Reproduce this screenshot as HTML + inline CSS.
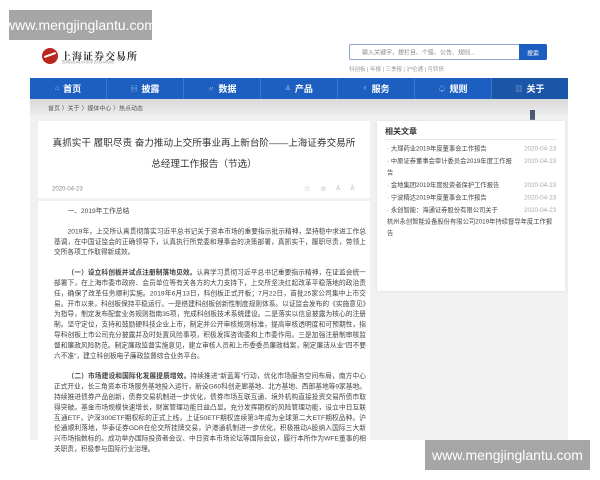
<!DOCTYPE html>
<html><head><meta charset="utf-8">
<style>
*{margin:0;padding:0;box-sizing:border-box}
body{width:600px;height:480px;background:#fff;position:relative;overflow:hidden;font-family:"Liberation Sans","Noto Sans CJK SC",sans-serif;color:#333}
.wm{position:absolute;background:#a6a6a6;color:#fff;font-size:14px;display:flex;align-items:center;justify-content:center}
.abs{position:absolute}
.s{transform:scale(.5);transform-origin:0 0}
.nav{left:30px;top:78px;width:538px;height:21px;background:#1d5fc0;display:flex}
.nav div{flex:1;color:#fff;font-size:9px;font-weight:bold;display:flex;align-items:center;justify-content:center;border-right:1px solid #3a78d0}
.nav div span{font-weight:normal;opacity:.6;margin-right:4px;font-size:7px}
.gray{left:30px;top:99px;width:538px;height:341px;background:#f1f1f1}
.crumb{left:30px;top:99px;width:538px;height:16px;background:linear-gradient(#d9d9d9,#ececec)}
.main{left:38px;top:121px;width:332px;height:319px;background:#fff}
.side{left:377px;top:121px;width:188px;height:170px;background:#fff;box-shadow:0 0 3px #ddd}
.p{font-size:13.4px;line-height:20.8px;color:#444;text-indent:27px;width:624px;text-align:justify}
.it{font-size:12.6px;line-height:23px;color:#444;position:relative;padding-left:12px;width:262px}
.d{position:absolute;left:286px;top:0;color:#aaa;white-space:nowrap}
</style></head><body>
<div class="wm" style="left:9px;top:10px;width:143px;height:30px">www.mengjinglantu.com</div>

<div class="abs" style="left:42px;top:48px;width:16px;height:16px;border-radius:50%;background:#b8281e"></div>
<div class="abs" style="left:44px;top:54px;width:12px;height:2px;background:#fff;transform:rotate(-20deg)"></div>
<div class="abs" style="left:61px;top:48px;font-size:10px;font-weight:bold;color:#333;font-family:'Noto Serif CJK SC',serif;letter-spacing:1px">上海证券交易所</div>
<div class="abs s" style="left:62px;top:61px;font-size:7px;color:#999">SHANGHAI STOCK EXCHANGE</div>

<div class="abs" style="left:349px;top:44px;width:198px;height:16px;border:1px solid #8aa4cf;border-radius:2px;background:#fff"></div>
<div class="abs s" style="left:362px;top:48px;font-size:12px;color:#888">输入关键字，搜栏目、个股、公告、规则...</div>
<div class="abs" style="left:519px;top:44px;width:28px;height:16px;background:#1d5fc0;border-radius:0 2px 2px 0"></div>
<div class="abs s" style="left:527px;top:49px;font-size:12px;color:#fff">搜索</div>
<div class="abs s" style="left:349px;top:65px;font-size:11px;color:#999">科创板 | 年报 | 三季报 | 沪伦通 | 可转债</div>

<div class="abs nav"><div><span>⌂</span>首页</div><div><span>▤</span>披露</div><div><span>〃</span>数据</div><div><span>≚</span>产品</div><div><span>♀</span>服务</div><div><span>♤</span>规则</div><div style="background:#1a55a8;border:none"><span>▥</span>关于</div></div>

<div class="abs gray"></div>
<div class="abs crumb"></div>
<div class="abs s" style="left:48px;top:104px;font-size:12px;color:#555">首页 〉关于 〉媒体中心 〉热点动态</div>
<div class="abs" style="left:530px;top:110px;width:5px;height:10px;background:#4a5a70"></div>
<div class="abs main">
 <div class="abs" style="left:0;top:12px;width:332px;font-size:9.6px;line-height:21px;text-align:center;color:#333;white-space:nowrap">真抓实干 履职尽责 奋力推动上交所事业再上新台阶——上海证券交易所<br>总经理工作报告（节选）</div>
 <div class="abs s" style="left:14px;top:64px;font-size:12px;color:#888">2020-04-23</div>
 <div class="abs s" style="left:266px;top:62px;font-size:13px;color:#bbb;letter-spacing:20px;white-space:nowrap">☆⊜ÂÂ</div>
 <div class="abs" style="left:0;top:77px;width:332px;height:3px;background:#f1f1f1"></div>
 <div class="abs s" style="left:16px;top:85px">
  <div class="p">一、2019年工作总结</div>
  <div class="p" style="margin-top:20px">2019年，上交所认真贯彻落实习近平总书记关于资本市场的重要指示批示精神，坚持稳中求进工作总基调，在中国证监会的正确领导下，认真执行所党委和理事会的决策部署，真抓实干，履职尽责，带领上交所各项工作取得新成效。</div>
  <div class="p" style="margin-top:20px"><b>（一）设立科创板并试点注册制落地见效。</b>认真学习贯彻习近平总书记重要指示精神，在证监会统一部署下，在上海市委市政府、会员单位等有关各方的大力支持下，上交所坚决扛起改革平稳落地的政治责任，确保了改革任务顺利实施。2019年6月13日，科创板正式开板；7月22日，首批25家公司集中上市交易。开市以来，科创板保持平稳运行。一是搭建科创板创新性制度规则体系。以证监会发布的《实施意见》为指导，制定发布配套业务规则指南35项，完成科创板技术系统建设。二是落实以信息披露为核心的注册制。坚守定位，支持和鼓励硬科技企业上市，制定并公开审核规则标准，提高审核透明度和可预期性，指导科创板上市公司充分披露并及时处置风险事项，积极发挥咨询委和上市委作用。三是加强注册制审核监督和廉政风险防范。制定廉政监督实施意见，建立审核人员和上市委委员廉政档案，制定廉洁从业"四不要六不准"，建立科创板电子廉政监督综合业务平台。</div>
  <div class="p" style="margin-top:20px"><b>（二）市场建设和国际化发展提质增效。</b>持续推进"新蓝筹"行动，优化市场服务空间布局，南方中心正式开业，长三角资本市场服务基地投入运行，新设G60科创走廊基地、北方基地、西部基地等9家基地。持续推进债券产品创新，债券交易机制进一步优化，债券市场互联互通、境外机构直接投资交易所债市取得突破。基金市场规模快速增长，财富管理功能日益凸显。充分发挥期权的风险管理功能，设立中日互联互通ETF，沪深300ETF期权标的正式上线，上证50ETF期权连续第3年成为全球第二大ETF期权品种。沪伦通顺利落地，华泰证券GDR在伦交所挂牌交易，沪港通机制进一步优化，积极推动A股纳入国际三大新兴市场指数标的。成功举办国际投资者会议、中日资本市场论坛等国际会议，履行本所作为WFE董事的相关职责，积极参与国际行业治理。</div>
 </div>
</div>

<div class="abs side">
 <div class="abs" style="left:8px;top:5px;font-size:8px;font-weight:bold;color:#333">相关文章</div>
 <div class="abs" style="left:8px;top:18px;width:172px;height:1px;background:#e5e5e5"></div>
 <div class="abs s" style="left:4px;top:22px">
  <div class="it">· 大理药业2019年度董事会工作报告<span class="d">2020-04-23</span></div>
  <div class="it" style="margin-top:2px">· 中原证券董事会审计委员会2019年度工作报告<span class="d">2020-04-23</span></div>
  <div class="it" style="margin-top:2px">· 金地集团2019年度投资者保护工作报告<span class="d">2020-04-23</span></div>
  <div class="it" style="margin-top:2px">· 宁波精达2019年度董事会工作报告<span class="d">2020-04-23</span></div>
  <div class="it" style="margin-top:2px;width:344px"><span style="display:inline-block;width:268px">· 永创智能：海通证券股份有限公司关于</span><span class="d">2020-04-23</span><br>杭州永创智能设备股份有限公司2019年持续督导年度工作报告</div>
 </div>
</div>

<div class="wm" style="left:425px;top:440px;width:165px;height:30px">www.mengjinglantu.com</div>
</body></html>
